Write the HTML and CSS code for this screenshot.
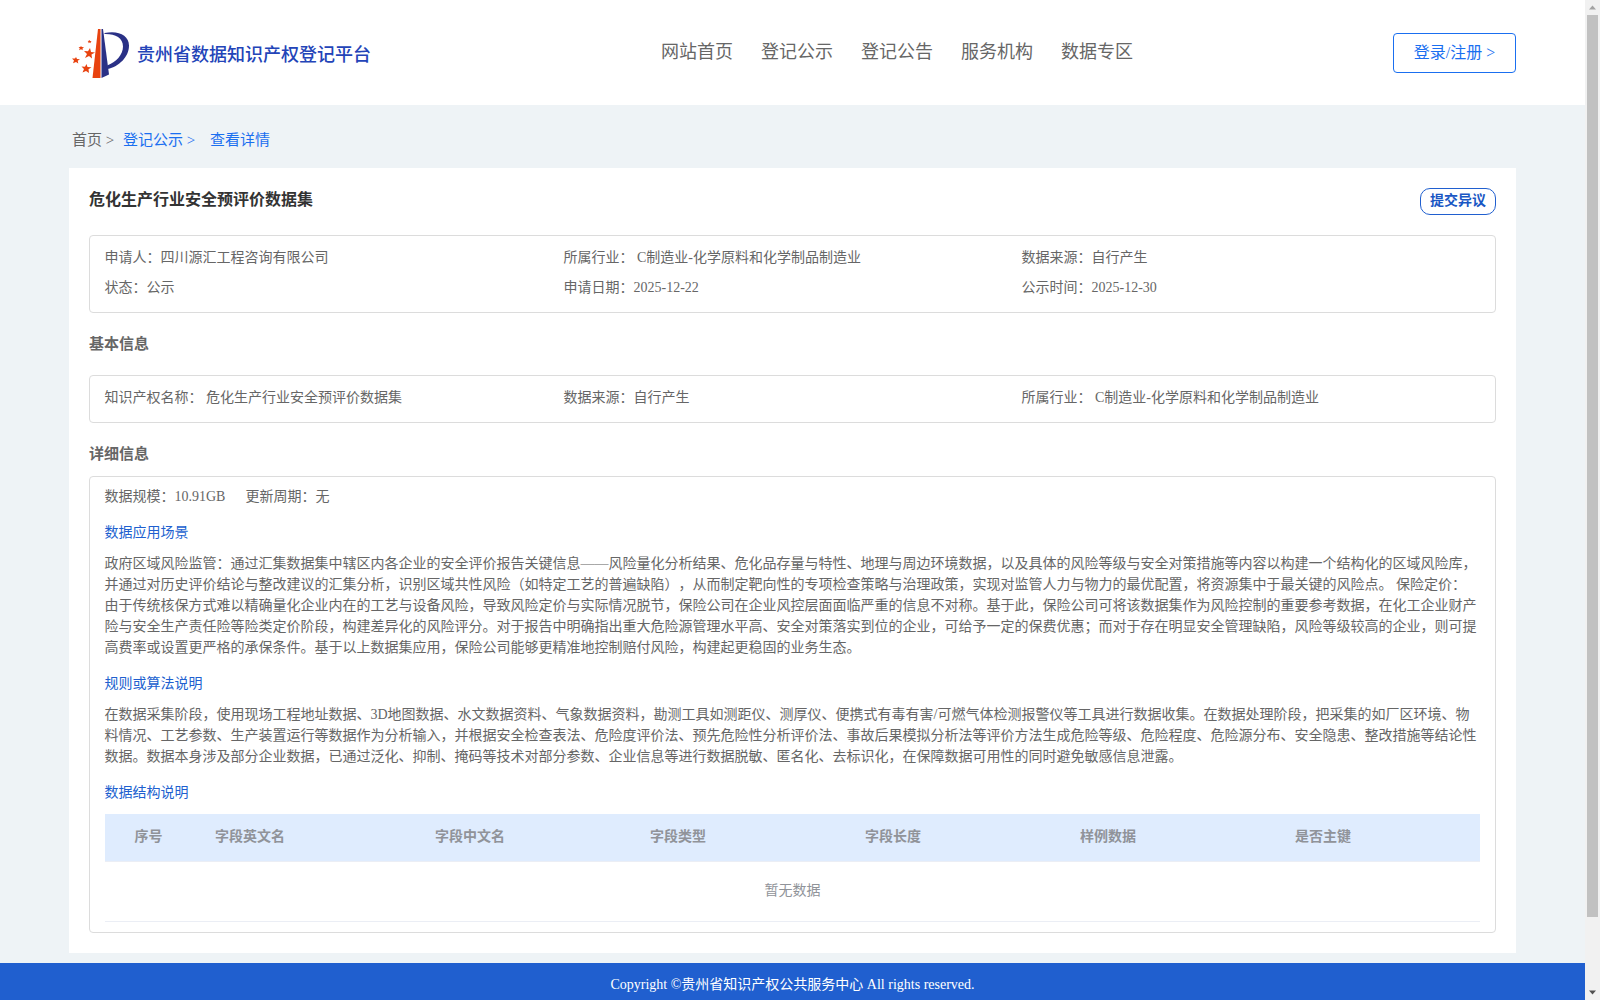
FILE: index.html
```html
<!DOCTYPE html>
<html lang="zh-CN">
<head>
<meta charset="utf-8">
<title>贵州省数据知识产权登记平台</title>
<link rel="stylesheet" href="styles.css">
</head>
<body>
<div class="page">
  <header class="header">
    <div class="brand">
      <svg class="logo" width="58" height="50" viewBox="0 0 58 50">
        <path fill="#e8420f" d="M26 0H28.500V49H20.500Z"/>
        <path fill="#2a3186" d="M29.500 0H31L37 45.500L29.500 49Z"/>
        <path fill="#2a3186" d="M32.500 4C46 1 57 6 57 16.500C57 28 47 37.500 35.700 40L35.200 36.500C44 33 51 26 51 17.500C51 8.500 43 4.700 32.500 5Z"/>
        <g fill="#e8420f">
          <path d="M18 19l1 4 4 .5-3.500 2 .5 4-3-2.500-4 2 2-4-3-3 4 .200z"/>
          <path d="M14.500 35l1 3 4 .3-3 2 .5 3.700-3-2-3.500 1.500 1.500-3.500-2.500-2.500 3.500.2z"/>
          <path d="M4 28l1 2 3 .2-2.300 1.500.6 2.800L4 33l-3 1.300L2 31.500 0 29.500l3-.1z"/>
          <path d="M9 17l.8 1 2.200.2-1.500 1.200.2 1.900-1.700-1-2 1 .8-2L6.500 18l1.800-.1z"/>
          <path d="M17.500 11l.6 1 1.500.1-1 .9.200 1.300-1.300-.7-1.300.7.400-1.400-1-1 1.400-.1z"/>
        </g>
      </svg>
      <span class="brand-name">贵州省数据知识产权登记平台</span>
    </div>
    <nav class="nav"><a>网站首页</a><a>登记公示</a><a>登记公告</a><a>服务机构</a><a>数据专区</a></nav>
    <a class="login">登录/注册 &gt;</a>
  </header>
  <main class="main">
    <div class="crumbs"><span class="crumb-home">首页 &gt;</span><a class="crumb-list">登记公示 &gt;</a><a>查看详情</a></div>
    <section class="panel">
      <div class="title-row"><h1>危化生产行业安全预评价数据集</h1><a class="objection">提交异议</a></div>
      <div class="box summary">
        <div>申请人：四川源汇工程咨询有限公司</div>
        <div>所属行业：&nbsp;C制造业-化学原料和化学制品制造业</div>
        <div>数据来源：自行产生</div>
        <div>状态：公示</div>
        <div>申请日期：2025-12-22</div>
        <div>公示时间：2025-12-30</div>
      </div>
      <h2 class="basic-title">基本信息</h2>
      <div class="box basic">
        <div>知识产权名称：&nbsp;危化生产行业安全预评价数据集</div>
        <div>数据来源：自行产生</div>
        <div>所属行业：&nbsp;C制造业-化学原料和化学制品制造业</div>
      </div>
      <h2 class="detail-title">详细信息</h2>
      <div class="box detail">
        <div class="meta"><span>数据规模：10.91GB</span><span>更新周期：无</span></div>
        <h3>数据应用场景</h3>
        <p>政府区域风险监管：通过汇集数据集中辖区内各企业的安全评价报告关键信息——风险量化分析结果、危化品存量与特性、地理与周边环境数据，以及具体的风险等级与安全对策措施等内容以构建一个结构化的区域风险库，<br>并通过对历史评价结论与整改建议的汇集分析，识别区域共性风险（如特定工艺的普遍缺陷），从而制定靶向性的专项检查策略与治理政策，实现对监管人力与物力的最优配置，将资源集中于最关键的风险点。 保险定价：<br>由于传统核保方式难以精确量化企业内在的工艺与设备风险，导致风险定价与实际情况脱节，保险公司在企业风控层面面临严重的信息不对称。基于此，保险公司可将该数据集作为风险控制的重要参考数据，在化工企业财产<br>险与安全生产责任险等险类定价阶段，构建差异化的风险评分。对于报告中明确指出重大危险源管理水平高、安全对策落实到位的企业，可给予一定的保费优惠；而对于存在明显安全管理缺陷，风险等级较高的企业，则可提<br>高费率或设置更严格的承保条件。基于以上数据集应用，保险公司能够更精准地控制赔付风险，构建起更稳固的业务生态。</p>
        <h3>规则或算法说明</h3>
        <p>在数据采集阶段，使用现场工程地址数据、3D地图数据、水文数据资料、气象数据资料，勘测工具如测距仪、测厚仪、便携式有毒有害/可燃气体检测报警仪等工具进行数据收集。在数据处理阶段，把采集的如厂区环境、物<br>料情况、工艺参数、生产装置运行等数据作为分析输入，并根据安全检查表法、危险度评价法、预先危险性分析评价法、事故后果模拟分析法等评价方法生成危险等级、危险程度、危险源分布、安全隐患、整改措施等结论性<br>数据。数据本身涉及部分企业数据，已通过泛化、抑制、掩码等技术对部分参数、企业信息等进行数据脱敏、匿名化、去标识化，在保障数据可用性的同时避免敏感信息泄露。</p>
        <h3>数据结构说明</h3>
        <div class="table">
          <div class="thead"><span class="index">序号</span><span>字段英文名</span><span>字段中文名</span><span>字段类型</span><span>字段长度</span><span>样例数据</span><span>是否主键</span></div>
          <div class="empty">暂无数据</div>
        </div>
      </div>
    </section>
  </main>
  <footer class="footer">Copyright ©贵州省知识产权公共服务中心 All rights reserved.</footer>
</div>
<div class="scrollbar">
  <svg width="15" height="15" viewBox="0 0 15 15"><path fill="#a3a3a3" d="M4 9.500h7L7.500 5.500z"/></svg>
  <div class="thumb"></div>
  <svg class="down" width="15" height="15" viewBox="0 0 15 15"><path fill="#505050" d="M4 5.500h7L7.500 9.500z"/></svg>
</div>
</body>
</html>
```
FILE: styles.css
```css
* { box-sizing: border-box; }
body {
  margin: 0;
  width: 1600px;
  height: 1000px;
  display: flex;
  overflow: hidden;
  font-family: "Liberation Serif", "Noto Sans CJK SC", serif;
  font-size: 14px;
  color: #666;
  text-spacing-trim: space-all;
  white-space: nowrap;
}
h1, h2, h3, p { margin: 0; }
.page { width: 1585px; height: 1000px; display: flex; flex-direction: column; background: #eef3f6; }
.header {
  height: 105px;
  flex: none;
  background: #fff;
  padding: 0 69px;
  display: grid;
  grid-template-columns: 592px 1fr 123px;
  align-items: center;
}
.brand { display: flex; align-items: center; gap: 7px; padding: 3px 0 0 3px; }
.logo { flex: none; }
.brand-name { font-size: 18px; font-weight: 500; color: #2344b8; line-height: 24px; padding-top: 1px; }
.nav { display: flex; gap: 28px; font-size: 18px; line-height: 26px; padding-bottom: 1px; }
.login {
  height: 40px;
  border: 1px solid #1a6ff0;
  border-radius: 4px;
  color: #1a6ff0;
  font-size: 16px;
  line-height: 38px;
  text-align: center;
}
.main { padding: 0 69px; height: 858px; flex: none; }
.crumbs { height: 63px; padding: 4px 0 0 3px; display: flex; align-items: center; font-size: 15px; color: #1a6ff0; }
.crumb-home { width: 51px; color: #666; }
.crumb-list { width: 87px; }
.panel { height: 785px; background: #fff; padding: 20px 20px 0; }
.title-row { height: 47px; display: flex; justify-content: space-between; align-items: flex-start; }
h1 { font-size: 16px; line-height: 24px; color: #333; }
.objection {
  width: 76px;
  height: 27px;
  border: 1px solid #205fcf;
  border-radius: 10px;
  color: #1a57c4;
  font-weight: bold;
  line-height: 24px;
  text-align: center;
}
.box { border: 1px solid #dcdcdc; border-radius: 4px; padding: 0 15px 0 14.5px; }
.summary, .basic { display: grid; grid-template-columns: 459px 458px 1fr; line-height: 30px; }
.summary { height: 78px; padding-top: 7px; align-content: start; }
.basic { height: 48px; padding-top: 7px; }
h2 { font-size: 15px; line-height: 20px; }
.basic-title { height: 62px; padding-top: 21px; }
.detail-title { height: 53px; padding-top: 21px; }
.detail { height: 457px; line-height: 21px; }
.meta { display: flex; gap: 20px; padding-top: 9px; }
h3 { font-size: 14px; font-weight: normal; color: #205fcf; line-height: 21px; padding: 15px 0 10px; }
.table { padding: 1px 0 0 .5px; }
.thead {
  height: 48px;
  background: #dfecfe;
  border-bottom: 1px solid #ebeef5;
  color: #909399;
  font-weight: bold;
  display: grid;
  grid-template-columns: 110px 220px 215px 215px 215px 215px 1fr;
  line-height: 46px;
}
.index { padding-left: 29.5px; }
.empty { height: 60px; line-height: 58px; text-align: center; color: #909399; border-bottom: 1px solid #ebeef5; }
.footer { flex: 1; background: #205fcf; color: #fff; text-align: center; line-height: 43px; overflow: hidden; }
.scrollbar { width: 15px; height: 1000px; background: #f1f1f1; display: flex; flex-direction: column; }
.scrollbar svg { display: block; flex: none; }
.thumb { height: 902px; margin: 0 2px; background: #c1c1c1; }
.down { margin-top: auto; }
```
